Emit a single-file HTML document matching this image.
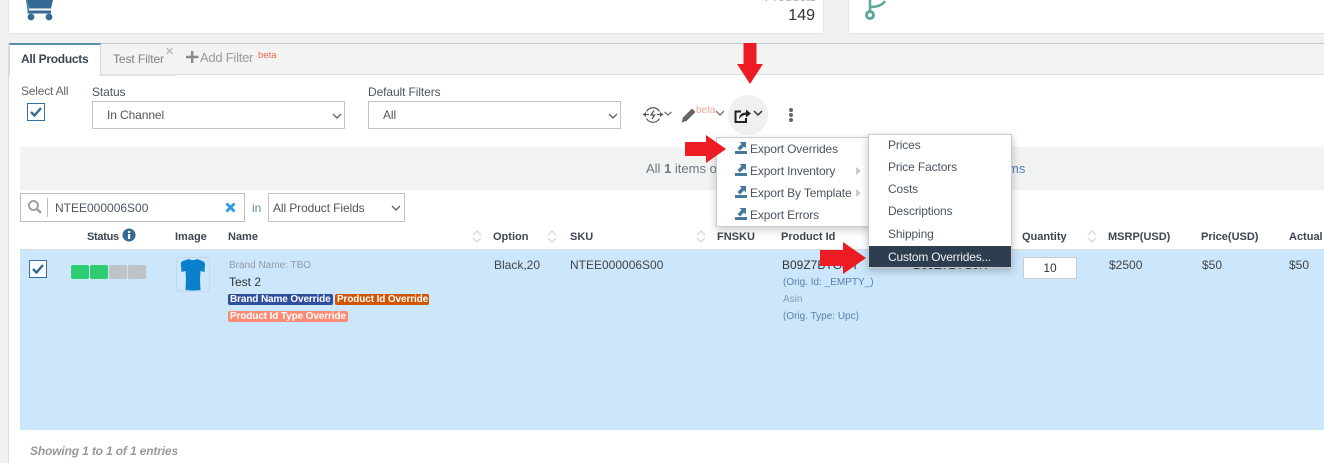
<!DOCTYPE html>
<html><head><meta charset="utf-8">
<style>
html,body{margin:0;padding:0}
body{width:1324px;height:463px;overflow:hidden;position:relative;background:#f0f0f0;font-family:"Liberation Sans",sans-serif;font-size:12px;color:#444}
.a{position:absolute;white-space:nowrap}
.box{position:absolute;box-sizing:border-box}
.th{position:absolute;top:231px;font-size:11px;font-weight:bold;color:#3d4650;white-space:nowrap;line-height:13px}
.sel{position:absolute;box-sizing:border-box;border:1px solid #c4c4c4;background:#fff;color:#555;line-height:27px;height:28px;letter-spacing:-.1px}
.mi{position:absolute;font-size:12px;color:#4a5560;white-space:nowrap;line-height:14px;letter-spacing:-.13px}
.tag{position:absolute;height:11px;line-height:11px;font-size:10px;font-weight:bold;color:#fff;border-radius:2px;padding:0 0 0 2px;white-space:nowrap;letter-spacing:-.12px;box-sizing:border-box;overflow:hidden}
</style></head><body>

<!-- top cards -->
<div class="box" style="left:8px;top:0;width:816px;height:34px;background:#fff;border-right:1px solid #e6e6e6;border-bottom:1px solid #e4e4e4;border-left:1px solid #e6e6e6"></div>
<div class="box" style="left:848px;top:0;width:476px;height:34px;background:#fff;border-left:1px solid #e6e6e6;border-bottom:1px solid #e4e4e4"></div>
<svg class="a" style="left:25px;top:0" width="30" height="21" viewBox="0 0 30 21"><path d="M2 0h26l-2 8.500H4z" fill="#336b94"/><path d="M2 0l2 10.500h22v3H2.500V10L1 0z" fill="#336b94"/><circle cx="6" cy="17" r="3.400" fill="#336b94"/><circle cx="24" cy="17" r="3.400" fill="#336b94"/></svg>
<div class="a" style="left:748px;top:-11px;font-size:13px;color:#aaa;width:68px;text-align:right">Products</div>
<div class="a" style="left:760px;top:7px;width:55px;text-align:right;font-size:16px;color:#333;line-height:18px">149</div>
<svg class="a" style="left:860px;top:0" width="32" height="22" viewBox="0 0 32 22"><path d="M10 0v12" stroke="#5aa89a" stroke-width="2.500" fill="none"/><path d="M10 7c6 0 12-1 15-6" stroke="#5aa89a" stroke-width="2.500" fill="none"/><circle cx="10" cy="15" r="3.500" fill="none" stroke="#5aa89a" stroke-width="3"/></svg>

<!-- main panel -->
<div class="box" style="left:8px;top:43px;width:1316px;height:420px;background:#fff;border-top:1px solid #c8c8c8;border-left:1px solid #dcdcdc"></div>
<div class="box" style="left:9px;top:44px;width:1315px;height:31px;background:#f3f3f3;border-bottom:1px solid #dcdcdc"></div>
<div class="box" style="left:100px;top:74px;width:76px;height:2px;background:#e0e0e0"></div>
<div class="box" style="left:9px;top:43px;width:92px;height:33px;background:#fff;border-top:2px solid #5b8ea6;border-right:1px solid #d8d8d8;border-left:1px solid #d8d8d8"></div>
<div class="a" style="left:21px;top:52px;font-weight:bold;color:#3d4650;line-height:15px;letter-spacing:-.27px">All Products</div>
<div class="a" style="left:113px;top:52px;color:#808080;line-height:15px;letter-spacing:-.1px">Test Filter</div>
<div class="a" style="left:165px;top:46px;font-size:11px;font-weight:bold;color:#bbb;line-height:12px">✕</div>
<svg class="a" style="left:186px;top:51px" width="13" height="13"><path d="M5 0h2.400v4.800H12.500v2.400H7.400V12H5V7.200H0V4.800h5z" fill="#8a8a8a"/></svg>
<div class="a" style="left:200px;top:50px;color:#999;line-height:15px;font-size:13px;letter-spacing:-.25px">Add Filter</div>
<div class="a" style="left:258px;top:50px;font-size:9.500px;color:#ef6a50;line-height:11px">beta</div>

<!-- filter row -->
<div class="a" style="left:21px;top:84px;color:#666;line-height:15px;letter-spacing:-.2px">Select All</div>
<div class="box" style="left:27px;top:103px;width:18px;height:18px;border:1px solid #3570ad;background:#fff"></div>
<svg class="a" style="left:29px;top:105px" width="14" height="13"><path d="M2 7l3.500 3.500L12 3" stroke="#336b94" stroke-width="2.400" fill="none"/></svg>
<div class="a" style="left:92px;top:85px;color:#4a5560;line-height:15px;letter-spacing:-.1px">Status</div>
<div class="sel" style="left:92px;top:101px;width:253px;padding-left:14px">In Channel</div>
<svg class="a" style="left:331px;top:112px" width="12" height="8"><path d="M2 2l4 4 4-4" stroke="#666" stroke-width="1.400" fill="none"/></svg>
<div class="a" style="left:368px;top:85px;color:#4a5560;line-height:15px;letter-spacing:-.1px">Default Filters</div>
<div class="sel" style="left:368px;top:101px;width:253px;padding-left:14px">All</div>
<svg class="a" style="left:607px;top:112px" width="12" height="8"><path d="M2 2l4 4 4-4" stroke="#666" stroke-width="1.400" fill="none"/></svg>

<!-- toolbar icons -->
<svg class="a" style="left:642px;top:105px" width="32" height="20" viewBox="0 0 32 20"><path d="M4.500 6.500A7.500 7.500 0 0 1 17.500 6.500M17.500 13.500A7.500 7.500 0 0 1 4.500 13.500" fill="none" stroke="#555" stroke-width="1.200"/><path d="M1 9.500h6M15 9.500h6" stroke="#555" stroke-width="1.200"/><path d="M1 9.500l3-2.500v5zM21 9.500l-3-2.500v5z" fill="#555"/><path d="M12 5.500L9 10h3.500L10 14" stroke="#555" stroke-width="1.300" fill="none"/><path d="M22.500 7l3.500 3 3.500-3" stroke="#777" stroke-width="1.400" fill="none"/></svg>
<svg class="a" style="left:680px;top:107px" width="17" height="17" viewBox="0 0 17 17"><path d="M1.500 15.500l1.500-5L12 1.500l3.500 3.500-9 9z" fill="#666"/></svg>
<div class="a" style="left:696px;top:105px;font-size:10px;color:#f4a690;line-height:11px">beta</div>
<svg class="a" style="left:715px;top:110px" width="10" height="7"><path d="M1 1l4 4 4-4" stroke="#777" stroke-width="1.400" fill="none"/></svg>
<div class="box" style="left:728px;top:95px;width:40px;height:40px;border-radius:50%;background:#f0f0f0"></div>
<svg class="a" style="left:734px;top:108px" width="18" height="15" viewBox="0 0 18 15"><path d="M7 3.500H1.500V14H12V10" fill="none" stroke="#222" stroke-width="2"/><path d="M5 11c0-4 3-6.500 7-6.500V1.500l5 4-5 4V7c-3 0-5 1.500-7 4z" fill="#222"/></svg>
<svg class="a" style="left:753px;top:110px" width="10" height="7"><path d="M1 1l4 4 4-4" stroke="#333" stroke-width="1.500" fill="none"/></svg>
<svg class="a" style="left:788px;top:107px" width="6" height="16"><circle cx="3" cy="3" r="2" fill="#666"/><circle cx="3" cy="8" r="2" fill="#666"/><circle cx="3" cy="13" r="2" fill="#666"/></svg>

<!-- gray bar -->
<div class="box" style="left:20px;top:147px;width:1304px;height:43px;background:#f1f3f3"></div>
<div class="a" style="left:646px;top:161px;font-size:13px;color:#6b7580;line-height:16px">All <b>1</b> items o</div>
<div class="a" style="left:1008px;top:161px;font-size:13px;color:#4a82c0;line-height:16px">ms</div>

<!-- search -->
<div class="box" style="left:20px;top:193px;width:225px;height:29px;border:1px solid #bdbdbd;background:#fff"></div>
<svg class="a" style="left:27px;top:199px" width="16" height="16"><circle cx="6.500" cy="6.500" r="4.500" fill="none" stroke="#a0a0a0" stroke-width="2"/><path d="M10 10l4 4" stroke="#a0a0a0" stroke-width="2.400"/></svg>
<div class="box" style="left:47px;top:198px;width:1px;height:19px;background:#bbb"></div>
<div class="a" style="left:55px;top:201px;color:#4a5560;line-height:15px">NTEE000006S00</div>
<svg class="a" style="left:225px;top:202px" width="11" height="11"><path d="M1.500 1.500l8 8M9.500 1.500l-8 8" stroke="#2f9be8" stroke-width="2.800"/></svg>
<div class="a" style="left:252px;top:201px;color:#5f87a8;line-height:15px;font-size:12px">in</div>
<div class="sel" style="left:268px;top:193px;width:137px;height:29px;padding-left:4px;line-height:28px">All Product Fields</div>
<svg class="a" style="left:390px;top:204px" width="12" height="8"><path d="M2 2l4 4 4-4" stroke="#666" stroke-width="1.400" fill="none"/></svg>

<!-- table header -->
<div class="box" style="left:20px;top:249px;width:1304px;height:1px;background:#dcdcdc"></div>
<div class="th" style="left:87px;letter-spacing:-.3px">Status</div>
<svg class="a" style="left:122px;top:228px" width="14" height="14"><circle cx="7" cy="7" r="6.500" fill="#336b94"/><rect x="6" y="6" width="2.200" height="5" fill="#fff"/><rect x="6" y="3" width="2.200" height="2" fill="#fff"/></svg>
<div class="th" style="left:175px">Image</div>
<div class="th" style="left:228px">Name</div>
<div class="th" style="left:493px">Option</div>
<div class="th" style="left:570px">SKU</div>
<div class="th" style="left:717px">FNSKU</div>
<div class="th" style="left:781px">Product Id</div>
<div class="th" style="left:1022px">Quantity</div>
<div class="th" style="left:1108px">MSRP(USD)</div>
<div class="th" style="left:1201px">Price(USD)</div>
<div class="th" style="left:1289px">Actual</div>
<svg class="a" style="left:472px;top:230px" width="10" height="13"><path d="M1 5l4-4 4 4M1 8l4 4 4-4" stroke="#d5d5d5" stroke-width="1.200" fill="none"/></svg>
<svg class="a" style="left:547px;top:230px" width="10" height="13"><path d="M1 5l4-4 4 4M1 8l4 4 4-4" stroke="#d5d5d5" stroke-width="1.200" fill="none"/></svg>
<svg class="a" style="left:696px;top:230px" width="10" height="13"><path d="M1 5l4-4 4 4M1 8l4 4 4-4" stroke="#d5d5d5" stroke-width="1.200" fill="none"/></svg>
<svg class="a" style="left:1087px;top:230px" width="10" height="13"><path d="M1 5l4-4 4 4M1 8l4 4 4-4" stroke="#d5d5d5" stroke-width="1.200" fill="none"/></svg>

<!-- row -->
<div class="box" style="left:20px;top:250px;width:1304px;height:180px;background:#cce7fc"></div>
<div class="box" style="left:29px;top:260px;width:18px;height:18px;border:1px solid #3570ad;background:#fff"></div>
<svg class="a" style="left:31px;top:262px" width="14" height="13"><path d="M2 7l3.500 3.500L12 3" stroke="#336b94" stroke-width="2.400" fill="none"/></svg>
<div class="box" style="left:71px;top:265px;width:18px;height:14px;background:#2ecc71;border-radius:2px"></div>
<div class="box" style="left:90px;top:265px;width:18px;height:14px;background:#2ecc71;border-radius:2px"></div>
<div class="box" style="left:109px;top:265px;width:18px;height:14px;background:#bdc3c7;border-radius:2px"></div>
<div class="box" style="left:128px;top:265px;width:18px;height:14px;background:#bdc3c7;border-radius:2px"></div>
<div class="box" style="left:176px;top:257px;width:34px;height:35px;border:1px solid #c4d8e6;border-radius:3px"></div>
<svg class="a" style="left:180px;top:258px" width="26" height="33" viewBox="0 0 26 33"><path d="M9 1c2 1.500 6 1.500 8 0l5.500 2c1.500 .5 2.500 2 2.500 3.500l-.5 7.500-4-1-.5 8 .5 11c-5 .8-11 .8-15 0l.5-11-.5-8-4 1-.5-7.500C.5 5 1.500 3.500 3 3z" fill="#0a80cc"/></svg>
<div class="a" style="left:229px;top:259px;font-size:10px;color:#939ba3;line-height:13px">Brand Name: TBO</div>
<div class="a" style="left:229px;top:275px;color:#333;line-height:15px">Test 2</div>
<div class="tag" style="left:228px;top:294px;background:#2f4f9e;width:105px">Brand Name Override</div>
<div class="tag" style="left:335px;top:294px;background:#d35400;width:94px">Product Id Override</div>
<div class="tag" style="left:228px;top:311px;background:#ff8a73;width:120px">Product Id Type Override</div>
<div class="a" style="left:494px;top:258px;color:#444;line-height:15px">Black,20</div>
<div class="a" style="left:570px;top:258px;color:#444;line-height:15px">NTEE000006S00</div>
<div class="a" style="left:782px;top:258px;color:#333;line-height:15px">B09Z7BTGJH</div>
<div class="a" style="left:783px;top:277px;font-size:10px;color:#5a7fa8;line-height:12px">(Orig. Id: _EMPTY_)</div>
<div class="a" style="left:783px;top:294px;font-size:10px;color:#8a98a6;line-height:12px">Asin</div>
<div class="a" style="left:783px;top:311px;font-size:10px;color:#5a7fa8;line-height:12px">(Orig. Type: Upc)</div>
<div class="a" style="left:913px;top:258px;color:#333;line-height:15px">B09Z7BTGJH</div>
<div class="box" style="left:1023px;top:257px;width:54px;height:22px;background:#fff;border:1px solid #ccc;border-radius:2px;text-align:center;line-height:20px;color:#333">10</div>
<div class="a" style="left:1109px;top:258px;color:#444;line-height:15px">$2500</div>
<div class="a" style="left:1202px;top:258px;color:#444;line-height:15px">$50</div>
<div class="a" style="left:1289px;top:258px;color:#444;line-height:15px">$50</div>
<div class="a" style="left:30px;top:444px;font-style:italic;font-weight:bold;color:#999;line-height:15px;letter-spacing:-.15px">Showing 1 to 1 of 1 entries</div>

<!-- menus -->
<div class="box" style="left:716px;top:137px;width:156px;height:90px;background:#fff;border:1px solid #ccc;box-shadow:0 3px 8px rgba(0,0,0,.2)"></div>
<svg class="a" style="left:735px;top:141px" width="12" height="13"><path d="M4.500 1H11V7.500L9 5.500 5 9.500 2.500 7l4-4z" fill="#47799a"/><rect y="10" width="12" height="3" fill="#47799a"/></svg>
<svg class="a" style="left:735px;top:163px" width="12" height="13"><path d="M4.500 1H11V7.500L9 5.500 5 9.500 2.500 7l4-4z" fill="#47799a"/><rect y="10" width="12" height="3" fill="#47799a"/></svg>
<svg class="a" style="left:735px;top:185px" width="12" height="13"><path d="M4.500 1H11V7.500L9 5.500 5 9.500 2.500 7l4-4z" fill="#47799a"/><rect y="10" width="12" height="3" fill="#47799a"/></svg>
<svg class="a" style="left:735px;top:207px" width="12" height="13"><path d="M4.500 1H11V7.500L9 5.500 5 9.500 2.500 7l4-4z" fill="#47799a"/><rect y="10" width="12" height="3" fill="#47799a"/></svg>
<div class="mi" style="left:750px;top:142px">Export Overrides</div>
<div class="mi" style="left:750px;top:164px">Export Inventory</div>
<div class="mi" style="left:750px;top:186px">Export By Template</div>
<div class="mi" style="left:750px;top:208px">Export Errors</div>
<svg class="a" style="left:856px;top:167px" width="5" height="8"><path d="M0 0l5 4-5 4z" fill="#ccc"/></svg>
<svg class="a" style="left:856px;top:189px" width="5" height="8"><path d="M0 0l5 4-5 4z" fill="#ccc"/></svg>

<div class="box" style="left:868px;top:134px;width:144px;height:134px;background:#fff;border:1px solid #ccc;box-shadow:0 3px 8px rgba(0,0,0,.25)"></div>
<div class="mi" style="left:888px;top:138px">Prices</div>
<div class="mi" style="left:888px;top:160px">Price Factors</div>
<div class="mi" style="left:888px;top:182px">Costs</div>
<div class="mi" style="left:888px;top:204px">Descriptions</div>
<div class="mi" style="left:888px;top:227px">Shipping</div>
<div class="box" style="left:869px;top:246px;width:142px;height:21px;background:#2c3e50"></div>
<div class="mi" style="left:888px;top:250px;color:#f0f0f0;letter-spacing:-.2px">Custom Overrides...</div>

<!-- red arrows -->
<svg class="a" style="left:737px;top:43px" width="26" height="42"><path d="M6.500 0h13v21H26L13 41 0 21h6.500z" fill="#ed1c24"/></svg>
<svg class="a" style="left:685px;top:135px" width="42" height="28"><path d="M0 7h21V0l20 14-20 14v-7H0z" fill="#ed1c24"/></svg>
<svg class="a" style="left:820px;top:242px" width="47" height="32"><path d="M0 8h23V0l23 16-23 16v-8H0z" fill="#ed1c24"/></svg>

</body></html>
